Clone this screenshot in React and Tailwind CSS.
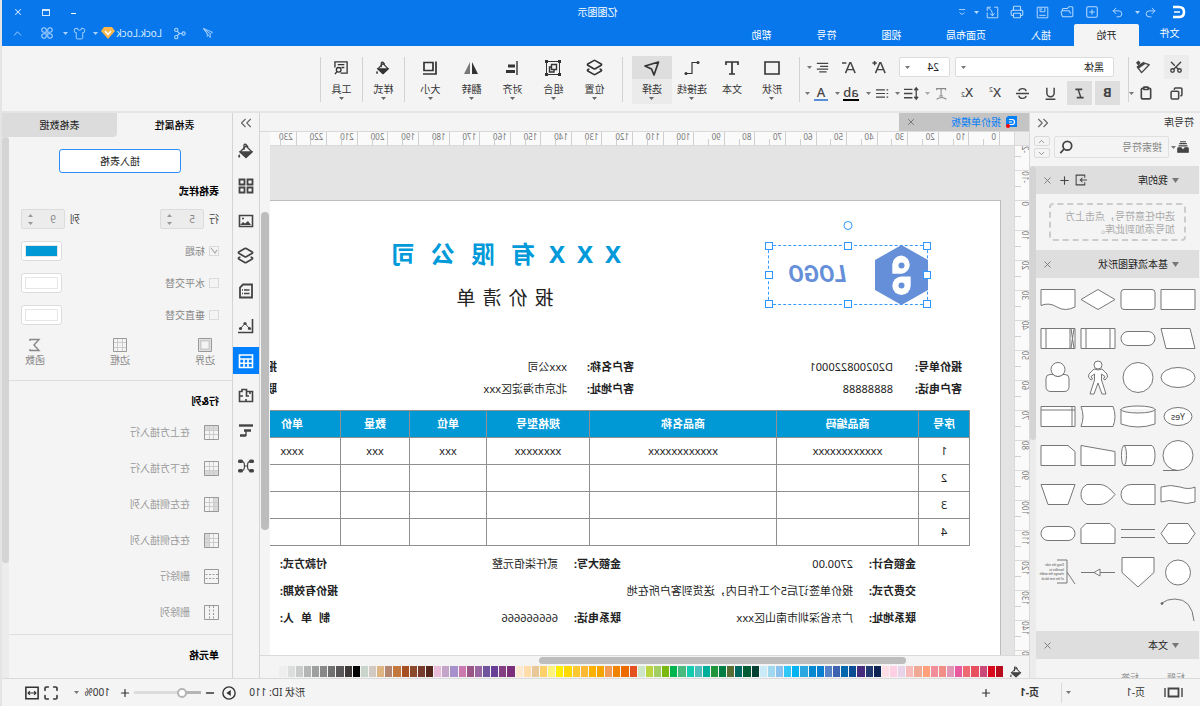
import {
    Scissors,
    Copy,
    Clipboard,
    Undo2,
    Redo2,
    SquarePlus,
    FolderOpen,
    Printer,
    Shirt,
    Layers2,
    ChevronUp,
    ChevronDown,
    ChevronsLeft,
    ChevronsRight,
    X,
    Minus,
    Plus,
    Maximize,
} from 'lucide-react';

const UI_FONT = "font-['Noto_Sans','Noto_Sans_CJK_SC',sans-serif]";

const PALETTE = [
    '#b80c1d', '#d90a1e', '#c94a78', '#e8505f', '#ed6a72', '#e85a9f', '#e098b6', '#f08e88', '#f28d9b', '#ffa07a',
    '#f0a994', '#f7bcba', '#e8d3e8', '#ffd0e4', '#ffdfe5', '#0c2353', '#21396f', '#452c7c', '#0a4d94', '#0166ab',
    '#3e62b0', '#5783c6', '#0a7fd0', '#0489d0', '#2da7e0', '#02b3f2', '#2fc8f8', '#8bc3ee', '#a0d8ef', '#cbeaf7',
    '#033f33', '#005a34', '#00665e', '#566c32', '#007c45', '#1f963b', '#00ae9a', '#4fbdbb', '#14cbb0', '#48ba80',
    '#00b450', '#7cb910', '#a3cf62', '#bad53f', '#cde6c7', '#e55020', '#ec6a00', '#f08300', '#f29b55', '#f5a400',
    '#fdb100', '#fdb933', '#fbc832', '#ffd900', '#ffee00', '#fcf27c', '#fdd06a', '#e8c898', '#ffdcaa', '#fde8d0',
    '#7b2f7b', '#833f81', '#683f95', '#70559c', '#9866a0', '#9a5587', '#cb7ab0', '#a791cc', '#c5a4c9', '#e9bcd9',
    '#58271b', '#783c2f', '#8b4a2b', '#a64f22', '#c2773e', '#b48670', '#deb483', '#d2c9c2', '#c9d4cb', '#000000',
    '#3e3838', '#595757', '#707070', '#888888', '#9e9f9f', '#b4b5b5', '#cacccc', '#dcdddd', '#eeeeee',
];

function Svg({ size = 16, children, className = '' }) {
    return (
        <svg width={size} height={size} viewBox="0 0 16 16" fill="none" stroke="currentColor" strokeWidth="1.4" className={`shrink-0 ${className}`} aria-hidden="true">
            {children}
        </svg>
    );
}

function Caret({ className = 'w-[5px] text-[#777]' }) {
    return (
        <span className={`flex shrink-0 items-center justify-center ${className}`}>
            <svg width="5" height="3" viewBox="0 0 5 3" fill="currentColor" aria-hidden="true">
                <path d="M0 0h5L2.500 3z" />
            </svg>
        </span>
    );
}

function IconButton({ label, className = '', children }) {
    return (
        <button type="button" aria-label={label} className={`flex h-full shrink-0 items-center justify-center ${className}`}>
            {children}
        </button>
    );
}

function Bucket({ size }) {
    return (
        <Svg size={size}>
            <path d="M8 3 2 9l6 5.500L14 9z" strokeLinejoin="round" />
            <path d="M2.500 9h11L8 14z" fill="currentColor" />
            <path d="M10 7V2.500Q10 .800 8 1.500L6 4" />
            <path d="M14.800 11q1.500 2 .700 3.500h-1.400q-.800-1.500.700-3.500z" fill="currentColor" stroke="none" />
        </Svg>
    );
}

/* ---------- title bar + menu ---------- */

const MENU = [
    ['文件', 'w-[61px]'],
    ['开始', 'w-[65px]'],
    ['插入', 'w-[66px]'],
    ['页面布局', 'w-[84px]'],
    ['视图', 'w-[65px]'],
    ['符号', 'w-[65px]'],
    ['帮助', 'w-[65px]'],
];

function TitleBar() {
    return (
        <header className="shrink-0 bg-[#0877ec] text-white">
            <div className="flex h-6 items-center">
                <div className="flex h-full flex-1 items-center pl-[9px] text-[#b5d9ff]">
                    <span className="flex w-6 justify-center text-white">
                        <svg width="14" height="14" viewBox="0 0 14 14" fill="none" stroke="currentColor">
                            <path d="M13 2H7Q2 2 2 7t5 5h6" strokeWidth="2.600" />
                            <path d="M6 7h6" strokeWidth="1.500" />
                        </svg>
                    </span>
                    <IconButton label="撤销" className="ml-[6px] w-5"><Undo2 size={13} strokeWidth={1.8} /></IconButton>
                    <Caret className="w-[6px]" />
                    <IconButton label="重做" className="ml-[5px] w-[25px]"><Redo2 size={13} strokeWidth={1.8} /></IconButton>
                    <IconButton label="新建" className="w-[25px]"><SquarePlus size={14} strokeWidth={1.8} /></IconButton>
                    <IconButton label="打开" className="w-[25px]"><FolderOpen size={14} strokeWidth={1.8} /></IconButton>
                    <IconButton label="保存" className="w-[25px]">
                        <Svg size={13}><path d="M1.500 1.500h13v13h-13zM5 2v5h6V2M9 3v2M4 11.500h8" strokeWidth="1.200" /></Svg>
                    </IconButton>
                    <IconButton label="打印" className="w-[25px]"><Printer size={14} strokeWidth={1.8} /></IconButton>
                    <IconButton label="导出" className="w-[25px]">
                        <Svg size={13}>
                            <path d="M6 1.500H1.500v13h13V8M10 1.500h4.500V6M14 2Q8 4 8 12M8 12 5.500 9M8 12l3-2.500" strokeWidth="1.200" />
                        </Svg>
                    </IconButton>
                    <Caret className="w-[6px]" />
                    <IconButton label="自定义" className="ml-[6px] w-3">
                        <Svg size={10}><path d="M3 4h10M4 9l4 3 4-3" /></Svg>
                    </IconButton>
                </div>
                <h1 className="text-[10px]">亿图图示</h1>
                <div className="flex h-full flex-1 items-center justify-end pr-0.5 text-[#d4e8ff]">
                    <IconButton label="最小化" className="w-7"><span className="mt-[3px] h-px w-[5px] bg-white" /></IconButton>
                    <IconButton label="最大化" className="w-7"><span className="h-[7px] w-2 border border-t-2" /></IconButton>
                    <IconButton label="关闭" className="w-7"><X size={10} strokeWidth={2.500} /></IconButton>
                </div>
            </div>
            <div className="flex h-[22px] items-stretch">
                <nav className="flex text-[10px]">
                    {MENU.map(([name, width], i) => (
                        <button
                            key={name}
                            type="button"
                            className={`${width} ${i === 1 ? 'rounded-t-[2px] bg-[#f4f4f4] text-[#222]' : ''} ${i === 0 ? 'pb-1' : ''}`}
                        >
                            {name}
                        </button>
                    ))}
                </nav>
                <div className="ml-auto flex items-center pr-0.5 pb-1 text-[#a9d2ff]">
                    <IconButton label="发送" className="w-7">
                        <Svg size={12}><path d="M14 2 2 7l3 2zM5 9v5l9-12M9 13V9l5-7" strokeWidth="1.200" /></Svg>
                    </IconButton>
                    <IconButton label="分享" className="w-7">
                        <Svg size={13}>
                            <circle cx="3" cy="8" r="2" />
                            <circle cx="12" cy="3.500" r="2" />
                            <circle cx="12" cy="12.500" r="2" />
                            <path d="M5 8h3l3-3M8 8l3 3" />
                        </Svg>
                    </IconButton>
                    <button type="button" className="ml-1 flex w-[61px] items-center justify-between text-[10px] leading-4 text-[#d9ebff]">
                        Lock.Lock
                        <svg width="14" height="12" viewBox="0 0 14 12">
                            <path d="M3 0h8l3 4-7 8-7-8z" fill="#ffb648" />
                            <path d="m4 4 3 3.500L10 4" fill="none" stroke="#fff" strokeWidth="1.500" />
                        </svg>
                    </button>
                    <Caret className="w-[10px]" />
                    <IconButton label="皮肤" className="w-[22px]"><Shirt size={13} strokeWidth={1.8} /></IconButton>
                    <Caret className="w-[6px]" />
                    <IconButton label="应用" className="w-8">
                        <Svg size={12}>
                            <path d="M7 7H4a3 3 0 1 1 3-3zM9 7V4a3 3 0 1 1 3 3zM7 9v3a3 3 0 1 1-3-3zM9 9h3a3 3 0 1 1-3 3z" />
                        </Svg>
                    </IconButton>
                    <IconButton label="收起" className="w-[27px]"><ChevronUp size={13} strokeWidth={1.8} /></IconButton>
                </div>
            </div>
        </header>
    );
}

/* ---------- ribbon ---------- */

function Divider({ className = '' }) {
    return <span className={`mt-[11px] h-[45px] w-px shrink-0 bg-[#d2d2d2] ${className}`} />;
}

function Tool({ label, active, caret = true, className = 'w-[41px]', children }) {
    return (
        <button type="button" className={`mt-[10px] flex h-12 shrink-0 flex-col items-center rounded-[1px] text-[#333] ${active ? 'bg-[#ebebeb]' : ''} ${className}`}>
            <span className={`flex h-[23px] w-full items-center justify-center ${active ? 'bg-[#dedede]' : ''}`}>{children}</span>
            <span className="h-[17px] text-[10px] leading-5">{label}</span>
            {caret && <Caret className="mt-[1px] text-[#666]" />}
        </button>
    );
}

function Ribbon() {
    return (
        <div className="flex h-[67px] shrink-0 border-b-2 border-[#e4e4e4] bg-[#f4f4f4] text-[#444]">
            <div className="flex w-[71px] shrink-0 flex-col gap-[2px] pt-[9px] pl-[11px]">
                <div className="flex h-6 items-center">
                    <IconButton label="剪切" className="w-[25px] bg-[#ececec]"><Scissors size={14} strokeWidth={2.400} className="-rotate-90" /></IconButton>
                    <IconButton label="格式刷" className="ml-2 w-[25px]">
                        <Svg size={15}>
                            <path d="m2 5 8 8.500 4.500-6L8 3z" strokeLinejoin="round" />
                            <path d="m7 3 7.500 5.500" strokeWidth="3" />
                            <path d="m11 3 2.500-2.500L16 3l-2.500 3z" fill="currentColor" stroke="none" />
                        </Svg>
                    </IconButton>
                </div>
                <div className="flex h-6 items-center">
                    <IconButton label="复制" className="w-[25px]"><Copy size={13} strokeWidth={2.800} /></IconButton>
                    <IconButton label="粘贴" className="ml-[5px] w-[25px]"><Clipboard size={14} strokeWidth={2.800} /></IconButton>
                    <Caret />
                </div>
            </div>
            <Divider />
            <div className="flex shrink-0 flex-col gap-[2px] pt-[9px]">
                <div className="flex h-6 items-center pl-[14px]">
                    <label className="relative flex h-5">
                        <select aria-label="字体" className="w-[159px] appearance-none rounded-[2px] border border-[#dcdcdc] bg-white pl-[9px] text-[10px] text-[#222]">
                            <option>黑体</option>
                        </select>
                        <Caret className="pointer-events-none absolute inset-y-0 right-[6px] text-[#777]" />
                    </label>
                    <label className="relative ml-[5px] flex h-5">
                        <select aria-label="字号" className="w-[51px] appearance-none rounded-[2px] border border-[#dcdcdc] bg-white pl-[10px] text-[10px] text-[#222]">
                            <option>24</option>
                        </select>
                        <Caret className="pointer-events-none absolute inset-y-0 right-[6px] text-[#777]" />
                    </label>
                    <IconButton label="增大字号" className="ml-[5px] w-[30px]">
                        <Svg size={14}><path d="m1 15 5-12h1l5 12M3 11h7M13 1v5M10.500 3.500h5" strokeWidth="1.700" /></Svg>
                    </IconButton>
                    <IconButton label="减小字号" className="w-[30px]">
                        <Svg size={14}><path d="m1 15 5-12h1l5 12M3 11h7M11 3.500h5" strokeWidth="1.700" /></Svg>
                    </IconButton>
                    <IconButton label="对齐" className="w-[22px]">
                        <Svg size={13}><path d="M1 3h14M1 6.500h10M1 10h14M3 13.500h9" strokeWidth="1.600" /></Svg>
                    </IconButton>
                    <Caret />
                </div>
                <div className="flex h-6 items-center pl-2 text-[13px]">
                    <IconButton label="加粗" className="w-[25px] rounded-[1px] bg-[#dedede] font-bold">B</IconButton>
                    <IconButton label="斜体" className="ml-[3px] w-[25px] rounded-[1px] bg-[#dedede]">
                        <Svg size={11}><path d="M4 2h10M2 14h10M10 2 6 14" strokeWidth="2.200" /></Svg>
                    </IconButton>
                    <IconButton label="下划线" className="ml-[2px] w-7">
                        <Svg size={13}><path d="M3.500 1v6.500a4.500 4.500 0 0 0 9 0V1M2 15h12" strokeWidth="1.800" /></Svg>
                    </IconButton>
                    <IconButton label="删除线" className="w-7">
                        <Svg size={13}><path d="M12.500 5Q12 2 8 2T3.500 5M3.500 11q.500 3 4.500 3t4.500-3.500M0 8h16" strokeWidth="1.700" /></Svg>
                    </IconButton>
                    <IconButton label="上标" className="w-7"><span className="font-medium">X</span><sup className="text-[7px]">2</sup></IconButton>
                    <IconButton label="下标" className="w-7"><span className="font-medium">X</span><sub className="text-[7px]">2</sub></IconButton>
                    <IconButton label="文字效果" className="w-[23px] text-[#888]">
                        <Svg size={13}><path d="M3 4V2h11v2M8.500 2v9M6 11h5M2 15q6-4 12 0" strokeWidth="1.300" /></Svg>
                    </IconButton>
                    <Caret className="w-[5px] text-[#aaa]" />
                    <IconButton label="行距" className="ml-[2px] w-[23px]">
                        <Svg size={15}><path d="M3 3v10M1 4.500 3 2l2 2.500M1 11.500 3 14l2-2.500M7 3.500h9M7 8h9M7 12.500h9" /></Svg>
                    </IconButton>
                    <Caret />
                    <IconButton label="列表" className="ml-[1px] w-[23px]">
                        <Svg size={13}><path d="M1 3.500h2M1 8h2M1 12.500h2M5 3.500h11M5 8h11M5 12.500h11" strokeWidth="1.500" /></Svg>
                    </IconButton>
                    <Caret />
                    <IconButton label="突出显示" className="ml-1 w-[22px]"><span className="border-b-2 border-black leading-[14px] font-medium">ab</span></IconButton>
                    <Caret />
                    <IconButton label="字体颜色" className="ml-[3px] w-[22px]"><span className="w-[14px] border-b-2 border-[#5a8ed8] leading-[14px] font-medium">A</span></IconButton>
                    <Caret />
                </div>
            </div>
            <Divider className="ml-[5px]" />
            <div className="ml-[7px] flex shrink-0">
                <Tool label="形状" className="w-10"><Svg><path d="M1 2h14v12H1z" strokeWidth="1.600" /></Svg></Tool>
                <Tool label="文本" className="w-10" caret={false}><Svg><path d="M2 5V2h12v3M8 2v12M5 14h6" strokeWidth="1.700" /></Svg></Tool>
                <Tool label="连接线" className="w-10">
                    <Svg>
                        <circle cx="2" cy="2.500" r="1.500" fill="currentColor" stroke="none" />
                        <circle cx="14" cy="13.500" r="1.500" fill="currentColor" stroke="none" />
                        <path d="M2 2.500h6v11h6" strokeWidth="1.200" />
                    </Svg>
                </Tool>
                <Tool label="选择" className="w-10" active><Svg><path d="M1.500 2 15 6 8.500 9 6 15z" strokeWidth="1.700" strokeLinejoin="round" /></Svg></Tool>
            </div>
            <Divider className="ml-[9px]" />
            <div className="ml-[7px] flex shrink-0">
                <Tool label="位置"><Layers2 size={17} strokeWidth={2.200} /></Tool>
                <Tool label="组合">
                    <Svg>
                        <path d="M1.500 1.500h13v13h-13z" strokeWidth="1" />
                        <path d="M4.500 4.500h5v5h-5zM7 9.500V12h4.500V7H9" />
                        <g fill="currentColor" stroke="none">
                            <path d="M0 0h3v3H0zM13 0h3v3h-3zM0 13h3v3H0zM13 13h3v3h-3z" />
                        </g>
                    </Svg>
                </Tool>
                <Tool label="对齐"><Svg><path d="M3 1v14" /><path d="M5 6h7M5 11.500h9" strokeWidth="3" /></Svg></Tool>
                <Tool label="翻转"><Svg><path d="M7 2v12H1z" fill="currentColor" stroke="none" /><path d="M9 2v12h6z" fill="#777" stroke="none" /></Svg></Tool>
                <Tool label="大小"><Svg><path d="M5 2.500h9v8H5z" strokeWidth="1.700" /><path d="M2 1.500v12.500h13" strokeWidth="1.700" /></Svg></Tool>
            </div>
            <Divider className="ml-[5px]" />
            <Tool label="样式"><Bucket size={14} /></Tool>
            <Divider />
            <Tool label="工具">
                <Svg size={15}>
                    <path d="M15 8V2H2v12h7" />
                    <path d="M5 5h7M5 8h3" />
                    <circle cx="11" cy="10.500" r="2.500" />
                    <path d="m13 12.500 2 2.500" />
                </Svg>
            </Tool>
            <Divider />
        </div>
    );
}

/* ---------- symbol library ---------- */

const SHAPES = [
    <path d="M3 9.500h34v20H3z" />,
    <rect x="3" y="9.500" width="34" height="20" rx="3" />,
    <path d="M20 9.500 37 19.500 20 29.500 3 19.500z" />,
    <path d="M3 9.500h34v16Q29 22 21 27T3 27z" />,
    <path d="M8 9.500h29l-5 20H3z" />,
    <rect x="3" y="12.500" width="34" height="14" rx="7" />,
    <path d="M3 9.500h34v20H3zM8 9.500v20M32 9.500v20" />,
    <path d="M3 9.500h34v20H3zM8 9.500v20M32 9.500v20M4 9.500Q7 19.500 4 29.500M7 9.500Q4 19.500 7 29.500" />,
    <ellipse cx="20" cy="19.500" rx="17" ry="10" />,
    <circle cx="20" cy="19.500" r="15" />,
    <>
        <path d="M16 11 11 16 10.500 19 13 22 14.500 21 13 18.500 16.500 16V22L12 36h4l4-11 4 11h4L23.500 22V16L27 18.500 25.500 21 27 22 29.500 19 29 16 24 11Q20 13 16 11z" />
        <circle cx="20" cy="7" r="4" />
    </>,
    <>
        <circle cx="20" cy="11.500" r="7" />
        <path d="M15 16.500h-2q-4 0-4 4v8q0 5 5 5h13q5 0 5-5v-8q0-4-4-4h-3a7 7 0 0 1-10 0z" />
    </>,
    <>
        <ellipse cx="20" cy="19.500" rx="14" ry="9" />
        <text x="20" y="22.500" textAnchor="middle" fontSize="9" fill="#444" stroke="none">Yes</text>
    </>,
    <path d="M3 12v15q17 6 34 0V12M3 12.500a17 3.500 0 0 1 34 0a17 3.500 0 0 1-34 0z" />,
    <path d="M5 9.500h32q-4 10 0 20H5q-4-10 0-20z" />,
    <path d="M3 9.500h34v20H3zM6 9.500v20M3 13h34" />,
    <>
        <circle cx="20" cy="19.500" r="15" />
        <path d="M20 34.500h15" />
    </>,
    <path d="M34 9.500H6Q3 12 3 19.500t3 10h28M34 9.500a2.500 10 0 0 1 0 20a2.500 10 0 0 1 0-20z" />,
    <path d="M3 15.500 37 9.500v20H3z" />,
    <path d="M10 9.500h27v20H3v-14z" />,
    <path d="M3 12q6 3 15 0t19 0v15q-8-3-17 0T3 27z" />,
    <path d="M3 9.500h24a10 10 0 0 1 0 20H3z" />,
    <path d="M3 19.500Q11 9.500 18 9.500h13q6 3 6 10t-6 10H18Q11 29.500 3 19.500z" />,
    <path d="M3 9.500h34l-7 20H10z" />,
    <path d="M3 19.500 10 9.500h20l7 10-7 10H10z" />,
    <path d="M3 15.500h34M3 23.500h34" />,
    <path d="M8 9.500h24l5 5v15H3v-15z" />,
    <rect x="3" y="12.500" width="34" height="14" rx="7" />,
    <circle cx="20" cy="19.500" r="12.500" />,
    <path d="M4 4.500h32v15L20 34 4 19.500z" />,
    <path d="M3 19.500h15M23 19.500h14M18 16v7l6-3.500z" />,
    <>
        <path d="M21 7H11v23h10M11 19 3 31" fill="none" />
        <g fontSize="3" fill="#444" stroke="none">
            <text x="14" y="13">Drag the side</text>
            <text x="14" y="17.500">handles to</text>
            <text x="14" y="22">change the width</text>
            <text x="14" y="26.500">of the text block</text>
        </g>
    </>,
    <>
        <path d="M4 29Q6 7 23 7q8 0 13 4" fill="none" />
        <circle cx="36" cy="11.500" r="1" fill="#444" />
    </>,
];

function SectionHeader({ title, children }) {
    return (
        <div className="flex h-[28px] shrink-0 items-center bg-[#dedede] pr-[5px] pl-[20px] text-[10px] text-[#222]">
            <svg width="7" height="5" viewBox="0 0 7 5" fill="#777"><path d="M0 0h7L3.500 5z" /></svg>
            <h3 className="ml-1 flex-1">{title}</h3>
            <div className="flex h-full items-center text-[#444]">
                {children}
                <IconButton label="关闭" className="w-[14px] text-[#777]"><X size={11} strokeWidth={2} /></IconButton>
            </div>
        </div>
    );
}

function SymbolLibrary() {
    return (
        <aside className="flex w-[171px] shrink-0 flex-col border-r border-[#dadada] bg-[#f4f4f4]">
            <div className="flex h-[19px] items-center justify-between pr-[4px] pl-[6px]">
                <h2 className="text-[10px] text-[#333]">符号库</h2>
                <button type="button" aria-label="收起"><ChevronsLeft size={18} strokeWidth={1.500} className="text-[#666]" /></button>
            </div>
            <div className="mt-1 flex h-[22px] shrink-0 items-center pl-[11px]">
                <Svg size={12} className="text-[#444]">
                    <path d="M2 9h3.500q0 2 2.500 2t2.500-2H14q1 0 1 1v5H1v-5q0-1 1-1z" fill="currentColor" />
                    <path d="M2 6.500h12M3 3.500h10M4 1h8" strokeWidth="1.600" />
                </Svg>
                <Caret className="w-[7px] text-[#777]" />
                <label className="relative ml-px flex h-full w-[115px]">
                    <input type="text" placeholder="搜索符号" aria-label="搜索符号" className="w-full rounded-[2px] border border-[#e0e0e0] bg-[#f4f4f4] pl-[6px] text-[10px] placeholder:text-[#888]" />
                    <Svg size={14} className="absolute top-1 right-[5px] text-[#444]">
                        <circle cx="6.500" cy="6.500" r="5" strokeWidth="2" />
                        <path d="m10 10 4.500 5" strokeWidth="2" />
                    </Svg>
                </label>
                <div className="ml-1 flex h-full flex-col justify-between">
                    <button type="button" aria-label="上一个" className="flex h-[10px] w-4 items-center justify-center rounded-[2px] border border-[#dadada]"><ChevronUp size={9} className="text-[#777]" /></button>
                    <button type="button" aria-label="下一个" className="flex h-[10px] w-4 items-center justify-center rounded-[2px] border border-[#dadada]"><ChevronDown size={9} className="text-[#777]" /></button>
                </div>
            </div>
            <div className="mt-2 flex min-h-0 flex-1">
                <div className="flex min-w-0 flex-1 flex-col overflow-hidden pl-px">
                    <SectionHeader title="我的库">
                        <IconButton label="导入" className="w-[15px]"><Svg size={12}><path d="M3 5V1.500h11.500v13H3V11M0 8h9M6 5l3 3-3 3" /></Svg></IconButton>
                        <IconButton label="添加" className="w-[19px]"><Plus size={13} strokeWidth={2} /></IconButton>
                    </SectionHeader>
                    <p className="mx-[13px] my-[9px] h-[38px] shrink-0 rounded-[4px] border-2 border-dashed border-[#ccc] px-[9px] pt-[5px] text-[10px] leading-[13px] whitespace-nowrap text-[#aaa]">
                        选中任意符号，点击上方
                        <br />
                        加号添加到此库。
                    </p>
                    <SectionHeader title="基本流程图形状" />
                    <div className="mt-[2px] ml-px grid w-40 shrink-0 grid-cols-4">
                        {SHAPES.map((shape, i) => (
                            <svg key={i} width="40" height="39" viewBox="0 0 40 39" fill="#fff" stroke="#777" strokeWidth="1">
                                {shape}
                            </svg>
                        ))}
                    </div>
                    <SectionHeader title="文本" />
                    <div className="mt-[14px] flex shrink-0 gap-7 pl-[14px] text-[9px] leading-[10px] text-[#888]">
                        <span>标题</span>
                        <span>标签</span>
                    </div>
                </div>
                <div className="w-[6px] shrink-0 bg-[#ececec]">
                    <div className="h-[274px] rounded-full bg-[#d4d4d4]" />
                </div>
            </div>
        </aside>
    );
}

/* ---------- canvas ---------- */

function Ruler() {
    return (
        <div className="flex h-[15px] shrink-0 overflow-hidden border-y border-[#dadada] bg-[#fafafa] text-[8px] text-[#777]">
            <div className="w-[15px] shrink-0 border-r border-[#dadada] bg-[#ececec]" />
            <div className="w-[14px] shrink-0" />
            <div className="-mr-1 flex flex-1">
                {Array.from({ length: 24 }, (_, i) => (
                    <div key={i} className="flex flex-1 items-end border-l border-[#cfcfcf]">
                        <span className="w-1/2 self-start pl-[3px] leading-[9px]">{i * 10}</span>
                        <span className="h-[6px] border-l border-[#cfcfcf]" />
                    </div>
                ))}
            </div>
        </div>
    );
}

function SideRuler() {
    return (
        <div className="w-[15px] shrink-0 overflow-hidden border-r border-[#dadada] bg-[#fafafa] text-[8px] text-[#777]">
            <div className="-mt-[6px]">
                {Array.from({ length: 18 }, (_, i) => (
                    <div key={i} className="flex h-[30px] flex-col border-t border-[#dadada]">
                        <span className="flex h-[15px] rotate-180 items-center justify-end pl-[6px] leading-[9px] [writing-mode:vertical-rl]">{i * 10 - 20}</span>
                        <span className="ml-auto w-[6px] border-t border-[#cfcfcf]" />
                    </div>
                ))}
            </div>
        </div>
    );
}

const HANDLES = [
    'top-0 left-0', 'top-0 left-1/2', 'top-0 left-full',
    'top-1/2 left-0', 'top-1/2 left-full',
    'top-full left-0', 'top-full left-1/2', 'top-full left-full',
];

function Logo() {
    return (
        <div className="relative flex h-[60px] w-40 shrink-0 items-center border border-dashed border-[#3a9bff]">
            <svg width="53" height="60" viewBox="0 0 53 60" className="-ml-px shrink-0">
                <path d="M26.500 0 53 15v30L26.500 60 0 45V15z" fill="#658fd8" />
                <path d="M26.500 10.500a9.200 9.200 0 0 1 9.200 9.200v9.100h-9.200a9.200 9.200 0 0 1 0-18.300z" fill="#fff" />
                <path d="M17.300 31.500h9.200a9.200 9.200 0 1 1-9.200 9.200z" fill="#fff" />
                <circle cx="26.500" cy="20.500" r="3" fill="#658fd8" />
                <circle cx="26.500" cy="40.500" r="3" fill="#658fd8" />
            </svg>
            <span className="ml-[29px] font-['Roboto',sans-serif] text-[23px] font-bold text-[#658fd8] italic">LOGO</span>
            <span className="absolute -top-[25px] left-1/2 size-[9px] -translate-x-1/2 rounded-full border border-[#2f95ff] bg-white" />
            {HANDLES.map((place) => (
                <span key={place} className={`absolute size-2 -translate-1/2 border border-[#2f95ff] bg-white ${place}`} />
            ))}
        </div>
    );
}

const COLUMNS = [
    ['序号', 'w-[51px]'],
    ['商品编码', 'w-[142px]'],
    ['商品名称', 'w-[187px]'],
    ['规格型号', 'w-[103px]'],
    ['单位', 'w-[77px]'],
    ['数量', 'w-[69px]'],
    ['单价', 'w-[97px]'],
];

const ROWS = [
    ['1', 'xxxxxxxxxxxx', 'xxxxxxxxxxxx', 'xxxxxxxx', 'xxx', 'xxx', 'xxxx'],
    ['2', '', '', '', '', '', ''],
    ['3', '', '', '', '', '', ''],
    ['4', '', '', '', '', '', ''],
];

function QuotePage() {
    return (
        <article className="mt-[54px] ml-[13px] w-[757px] border-t border-l border-[#bdbdbd] bg-white text-[11px] text-[#222]">
            <div className="flex pt-[44px] pl-[72px]">
                <Logo />
                <div className="-mt-[5px] ml-[149px]">
                    <h2 className="flex gap-4 text-[24px] leading-7 font-bold text-[#009ada]">
                        {[...'XXX有限公司'].map((c, i) => (
                            <span key={i} className={`flex justify-center ${c === 'X' ? 'w-3' : 'w-6'}`}>{c}</span>
                        ))}
                    </h2>
                    <p className="mt-[18px] flex justify-center gap-[7px] text-[19px] leading-6">
                        {[...'报价清单'].map((c) => <span key={c}>{c}</span>)}
                    </p>
                </div>
            </div>
            <dl className="mt-[46px] grid grid-cols-[69px_259px_67px_290px_60px] pl-[38px] leading-[22px] whitespace-nowrap [&_dt]:font-bold">
                <dt>报价单号:</dt>
                <dd>D202008220001</dd>
                <dt>客户名称:</dt>
                <dd>xxx公司</dd>
                <dt>报价日期:</dt>
                <dt className="col-start-1">客户电话:</dt>
                <dd>88888888</dd>
                <dt>客户地址:</dt>
                <dd>北京市海淀区xxx</dd>
                <dt>联系电话:</dt>
            </dl>
            <table className="mt-[10px] ml-[30px] w-[726px] table-fixed border-collapse text-center [&_td]:border [&_td]:border-[#8f8f8f] [&_th]:border [&_th]:border-[#8f8f8f]">
                <thead>
                    <tr className="h-[27px] bg-[#0099d6] text-white">
                        {COLUMNS.map(([name, width]) => <th key={name} className={`${width} leading-4 font-bold`}>{name}</th>)}
                    </tr>
                </thead>
                <tbody>
                    {ROWS.map((row) => (
                        <tr key={row[0]} className="h-[27px]">
                            {row.map((cell, i) => <td key={i} className="leading-4">{cell}</td>)}
                        </tr>
                    ))}
                </tbody>
            </table>
            <dl className="mt-[4px] grid grid-cols-[63px_232px_63px_198px_80px] pl-[84px] leading-[27px] whitespace-nowrap [&_dt]:font-bold">
                <dt>金额合计:</dt>
                <dd>2700.00</dd>
                <dt>金额大写:</dt>
                <dd>贰仟柒佰元整</dd>
                <dt className="text-right">付款方式:</dt>
                <dt>交费方式:</dt>
                <dd className="col-span-3">报价单签订后5个工作日内，送货到客户所在地</dd>
                <dt className="text-right">报价有效期:</dt>
                <dt>联系地址:</dt>
                <dd>广东省深圳市南山区xxx</dd>
                <dt>联系电话:</dt>
                <dd>666666666</dd>
                <dt className="flex justify-end gap-[7px]"><span>制</span><span>单</span><span>人:</span></dt>
            </dl>
            <div className="h-14" />
        </article>
    );
}

function Editor() {
    return (
        <main className="flex min-w-0 flex-1 flex-col bg-[#f4f4f4]">
            <div className="flex h-[18px] shrink-0">
                <div className="flex w-[130px] items-center bg-[#c4c4c4] pr-[7px] pl-[11px]">
                    <svg width="12" height="12" viewBox="0 0 12 12">
                        <path d="M1 0h9l2 2v8l-2 1H1z" fill="#0a80f5" />
                        <path d="M9 3.500H6Q3.500 3.500 3.500 6T6 8.500h3M6 6h3" fill="none" stroke="#fff" strokeWidth="1.200" />
                        <circle cx="10" cy="10" r="2" fill="#f00" />
                    </svg>
                    <span className="ml-[5px] flex-1 text-[10px] text-[#0a80f5]">报价单模板</span>
                    <button type="button" aria-label="关闭标签"><X size={10} strokeWidth={2.400} className="text-[#777]" /></button>
                </div>
            </div>
            <div className="flex min-h-0 flex-1">
                <div className="flex min-w-0 flex-1 flex-col">
                    <Ruler />
                    <div className="flex min-h-0 flex-1">
                        <SideRuler />
                        <div className="min-w-0 flex-1 overflow-hidden bg-[#e4e4e4]">
                            <QuotePage />
                        </div>
                    </div>
                </div>
                <div className="w-[10px] shrink-0 border-t border-[#dadada] pt-[80px]">
                    <div className="mx-px h-[318px] rounded-full bg-[#bdbdbd]" />
                </div>
            </div>
            <div className="h-[10px] shrink-0 border-t border-[#dadada] pt-px">
                <div className="ml-[123px] h-[7px] w-[367px] rounded-full bg-[#bdbdbd]" />
            </div>
            <div className="flex h-[13px] shrink-0 items-center pr-[19px] pl-[7px] text-[#444]">
                <Bucket size={12} />
                <div className="ml-[7px] flex h-[11px] flex-1">
                    {PALETTE.map((color, i) => (
                        <button key={i} type="button" aria-label={color} className="flex-1 border-r border-[#f4f4f4]" style={{ backgroundColor: color }} />
                    ))}
                </div>
            </div>
        </main>
    );
}

/* ---------- property panel ---------- */

const STRIP = [
    ['填充', <Bucket size={16} />],
    ['符号', <Svg><path d="M1.500 1.500h5v5h-5zM9.500 1.500h5v5h-5zM1.500 9.500h5v5h-5zM9.500 9.500h5v5h-5z" strokeWidth="1.800" /></Svg>],
    ['图片', <Svg><path d="M1.500 2.500h13v11h-13z" strokeWidth="1.600" /><path d="m3 12 3-4 3 2.500 2-1.500 3 3z" fill="currentColor" stroke="none" /><circle cx="11" cy="5.500" r="1" fill="currentColor" stroke="none" /></Svg>],
    ['图层', <Layers2 size={17} strokeWidth={2.400} />],
    ['页面', <Svg><path d="M2 1.500h9l3 3v10H2z" strokeWidth="1.800" /><path d="M4.500 7H10M11 7h1M4.500 10.500H10M11 10.500h1" strokeWidth="1.600" /></Svg>],
    ['图表', <Svg><path d="M1.500 1v13.500H16" strokeWidth="1.600" /><path d="m4.500 10.500 4.500-5 4.500 5" strokeWidth="1" /><g fill="currentColor" stroke="none"><circle cx="4.500" cy="10.500" r="1.600" /><circle cx="9" cy="5.500" r="1.600" /><circle cx="13.500" cy="10.500" r="1.600" /></g></Svg>],
    ['表格', <Svg><path d="M1.500 2h13v12.500h-13zM1.500 6h13M1.500 10.200h13M6 6v8.500M10 6v8.500" strokeWidth="1.600" /></Svg>],
    ['平面图', <Svg><path d="M1.500 3.500h6v-2H12v2h2.500v10h-13zM7.500 3.500V8H5M8 13.500V11M11 8h3.500M4 3.500V6" strokeWidth="1.600" /></Svg>],
    ['甘特图', <Svg><path d="M1 2.500h14" strokeWidth="2.400" /><path d="M3 7.500h7M8 12.500h6" strokeWidth="2.400" /><path d="M8 8v5" /></Svg>],
    ['思维导图', <Svg><g fill="currentColor" stroke="none"><rect x="0" y="1.500" width="5" height="3.500" rx="1.500" /><rect x="11" y="1.500" width="5" height="3.500" rx="1.500" /><rect x="0" y="11" width="5" height="3.500" rx="1.500" /><rect x="11" y="11" width="5" height="3.500" rx="1.500" /></g><path d="M4 3.500q2.500 0 2.500 4.500T4 12.500M12 3.500Q9.500 3.500 9.500 8t2.500 4.500M6.500 8h3" strokeWidth="1.200" /></Svg>],
];

function IconStrip() {
    return (
        <nav className="flex w-[28px] shrink-0 flex-col border-x border-[#d4d4d4] bg-[#f4f4f4] text-[#444]">
            <button type="button" aria-label="展开" className="flex h-[20px] items-center justify-center text-[#666]"><ChevronsRight size={18} strokeWidth={1.500} /></button>
            {STRIP.map(([name, icon], i) => (
                <button key={name} type="button" aria-label={name} className="flex h-[35px] items-center justify-center">
                    <span className={`flex h-[27px] w-full items-center justify-center ${i === 6 ? 'bg-[#0080ff] text-white' : ''}`}>{icon}</span>
                </button>
            ))}
        </nav>
    );
}

function NumberField({ label, value }) {
    return (
        <label className="flex items-center gap-[5px] text-[10px] text-[#444]">
            {label}
            <span className="flex h-5 w-[44px] items-center justify-between rounded-[2px] border border-[#dcdcdc] bg-[#ececec] pr-[6px] pl-2">
                <input type="text" disabled defaultValue={value} className="w-4 text-[#888]" />
                <svg width="5" height="11" viewBox="0 0 5 11" fill="#999"><path d="M0 3h5L2.500 0zM0 8h5l-2.500 3z" /></svg>
            </span>
        </label>
    );
}

const STYLE_ROWS = [
    ['标题', '#0099d6', true],
    ['水平交替', '#ffffff', false],
    ['垂直交替', '#ffffff', false],
];

function StyleRow({ label, color, checked }) {
    return (
        <div className="flex h-8 items-center justify-between">
            <label className="flex items-center gap-1 text-[10px] text-[#888]">
                <input type="checkbox" disabled defaultChecked={checked} className="peer size-[10px] appearance-none border border-[#dadada]" />
                <span className="pointer-events-none -ml-[13px] hidden w-[9px] text-[#aaa] peer-checked:block">
                    <svg width="8" height="8" viewBox="0 0 8 8" fill="none" stroke="currentColor" strokeWidth="1.200"><path d="m1 3 2 3 4-5" /></svg>
                </span>
                {label}
            </label>
            <button type="button" aria-label={`${label}颜色`} className="h-5 w-[41px] rounded-[3px] border border-[#dcdcdc] bg-white p-[3px]">
                <span className="block h-full border border-[#e6e6e6]" style={{ backgroundColor: color }} />
            </button>
        </div>
    );
}

function GridIcon({ fill, children }) {
    return (
        <svg width="15" height="15" viewBox="0 0 15 15" fill="none" stroke="#ccc" className="shrink-0">
            {fill && <path d={fill} fill="#d8d8d8" stroke="none" />}
            {children || <path d="M5.500 1v13M9.500 1v13M1 5.500h13M1 9.500h13" />}
            <path d="M.500.500h14v14H.500z" stroke="#999" />
        </svg>
    );
}

const ROW_ACTIONS = [
    ['在上方插入行', <GridIcon fill="M0 0h15v5H0z" />],
    ['在下方插入行', <GridIcon fill="M0 10h15v5H0z" />],
    ['在左侧插入列', <GridIcon fill="M0 0h5v15H0z" />],
    ['在右侧插入列', <GridIcon fill="M10 0h5v15h-5z" />],
    ['删除行', <GridIcon><path d="M1 5.500h13M1 9.500h13" stroke="#999" strokeDasharray="2 1.500" /></GridIcon>],
    ['删除列', <GridIcon><path d="M5.500 1v13M9.500 1v13" stroke="#999" strokeDasharray="2 1.500" /></GridIcon>],
];

const CELL_TOOLS = [
    ['边界', <svg width="14" height="14" viewBox="0 0 14 14" fill="none"><path d="M.500.500h13v13H.500z" stroke="#999" /><path d="M2.500 2.500h9v9h-9z" stroke="#ccc" strokeWidth="2" /></svg>],
    ['边框', <svg width="14" height="14" viewBox="0 0 14 14" fill="none" stroke="#ccc"><path d="M4.500 0v14M9.500 0v14M0 4.500h14M0 9.500h14" /><path d="M.500.500h13v13H.500z" stroke="#999" /></svg>],
    ['函数', <svg width="14" height="14" viewBox="0 0 14 14" fill="none" stroke="#888" strokeWidth="1.400"><path d="M12 3V1.500H3L8 7l-5 5.500h9V11" /></svg>],
];

function PropertyPanel() {
    return (
        <aside className="flex w-[230px] shrink-0 flex-col bg-[#f4f4f4]">
            <div role="tablist" className="flex h-6 shrink-0 text-[10px]">
                <button type="button" role="tab" aria-selected="true" className="flex-1 font-medium text-black">表格属性</button>
                <button type="button" role="tab" aria-selected="false" className="flex-1 rounded-bl-[4px] bg-[#dcdcdc] text-[#222]">表格数据</button>
            </div>
            <div className="flex min-h-0 flex-1">
                <div className="min-w-0 flex-1 overflow-hidden">
                    <div className="pr-3 pl-[13px]">
                        <button type="button" className="mt-3 ml-[38px] block h-6 w-[122px] rounded-[3px] border border-[#2f8ff5] bg-white text-[10px] text-[#222]">插入表格</button>
                        <h3 className="mt-[10px] text-[10px] leading-4 font-bold">表格样式</h3>
                        <div className="mt-[10px] flex justify-between">
                            <NumberField label="行" value="5" />
                            <NumberField label="列" value="9" />
                        </div>
                        <div className="mt-[6px]">
                            {STYLE_ROWS.map(([label, color, checked]) => <StyleRow key={label} label={label} color={color} checked={checked} />)}
                        </div>
                        <div className="mt-[7px] flex justify-between pr-[4px] pl-1">
                            {CELL_TOOLS.map(([label, icon]) => (
                                <button key={label} type="button" className="flex flex-col items-center text-[10px] leading-4 text-[#888]">
                                    {icon}
                                    {label}
                                </button>
                            ))}
                        </div>
                    </div>
                    <div className="mt-[12px] border-t border-[#dedede] pl-[13px]">
                        <h3 className="mt-3 mb-[5px] text-[10px] leading-4 font-bold">行&amp;列</h3>
                        {ROW_ACTIONS.map(([label, icon]) => (
                            <button key={label} type="button" className="flex h-9 items-center gap-[14px] text-[10px] text-[#999]">
                                {icon}
                                {label}
                            </button>
                        ))}
                    </div>
                    <div className="mt-[4px] border-t border-[#dedede] pl-[13px]">
                        <h3 className="mt-3 text-[10px] leading-4 font-bold">单元格</h3>
                    </div>
                </div>
                <div className="w-[7px] shrink-0 bg-[#ececec]">
                    <div className="h-[426px] rounded-full bg-[#d4d4d4]" />
                </div>
            </div>
        </aside>
    );
}

/* ---------- status bar ---------- */

function StatusBar() {
    return (
        <footer className="flex h-7 shrink-0 items-center border-t border-[#dadada] bg-[#f4f4f4] text-[10px] text-[#333]">
            <IconButton label="页面视图" className="ml-4 w-5">
                <svg width="19" height="11" viewBox="0 0 19 11" fill="none" stroke="#444"><path d="M4.500 1.500h10v8h-10z" strokeWidth="1.800" /><path d="M1 1v9M18 1v9" strokeWidth="1.400" /></svg>
            </IconButton>
            <span className="ml-[19px] w-[72px]">页-1</span>
            <Caret className="w-2 text-[#777]" />
            <span className="ml-[3px] h-5 w-px bg-[#dadada]" />
            <span className="ml-[22px] font-bold">页-1</span>
            <IconButton label="添加页面" className="ml-[24px] w-5"><Plus size={12} strokeWidth={2.400} /></IconButton>
            <span className="ml-auto w-[61px] whitespace-nowrap">形状 ID: 110</span>
            <IconButton label="播放" className="ml-[8px] w-[14px]">
                <Svg size={14}><circle cx="8" cy="8" r="7" strokeWidth="1.600" /><path d="m6 4.500 5 3.500-5 3.500z" fill="currentColor" stroke="none" /></Svg>
            </IconButton>
            <IconButton label="缩小" className="ml-[6px] w-3"><Minus size={12} strokeWidth={2.800} /></IconButton>
            <input
                type="range"
                aria-label="缩放"
                min="0"
                max="100"
                defaultValue="24"
                className="ml-[3px] h-[10px] w-[67px] appearance-none bg-[linear-gradient(to_right,#b5b5b5_18px,#dcdcdc_18px)] bg-[length:100%_3px] bg-center bg-no-repeat [&::-webkit-slider-thumb]:size-[10px] [&::-webkit-slider-thumb]:appearance-none [&::-webkit-slider-thumb]:rounded-full [&::-webkit-slider-thumb]:border-2 [&::-webkit-slider-thumb]:border-[#b5b5b5] [&::-webkit-slider-thumb]:bg-white"
            />
            <IconButton label="放大" className="ml-[3px] w-3"><Plus size={12} strokeWidth={2.400} /></IconButton>
            <span className="ml-[9px] w-[28px]">100%</span>
            <Caret className="ml-[2px] w-[6px] text-[#777]" />
            <IconButton label="全屏" className="ml-[15px] w-4"><Maximize size={16} strokeWidth={2.400} /></IconButton>
            <IconButton label="适应宽度" className="mr-[23px] ml-[4px] w-[14px]">
                <Svg size={14}><path d="M1 1.500h14v13H1z" strokeWidth="1.800" /><path d="M3.500 8h9M5.500 6l-2 2 2 2M10.500 6l2 2-2 2" strokeWidth="1.300" /></Svg>
            </IconButton>
        </footer>
    );
}

export default function App() {
    return (
        <div className={`flex h-screen -scale-x-100 flex-col overflow-hidden border-r-2 border-[#e4e4e4] bg-[#f4f4f4] ${UI_FONT}`}>
            <TitleBar />
            <Ribbon />
            <div className="flex min-h-0 flex-1">
                <SymbolLibrary />
                <Editor />
                <IconStrip />
                <PropertyPanel />
            </div>
            <StatusBar />
        </div>
    );
}
